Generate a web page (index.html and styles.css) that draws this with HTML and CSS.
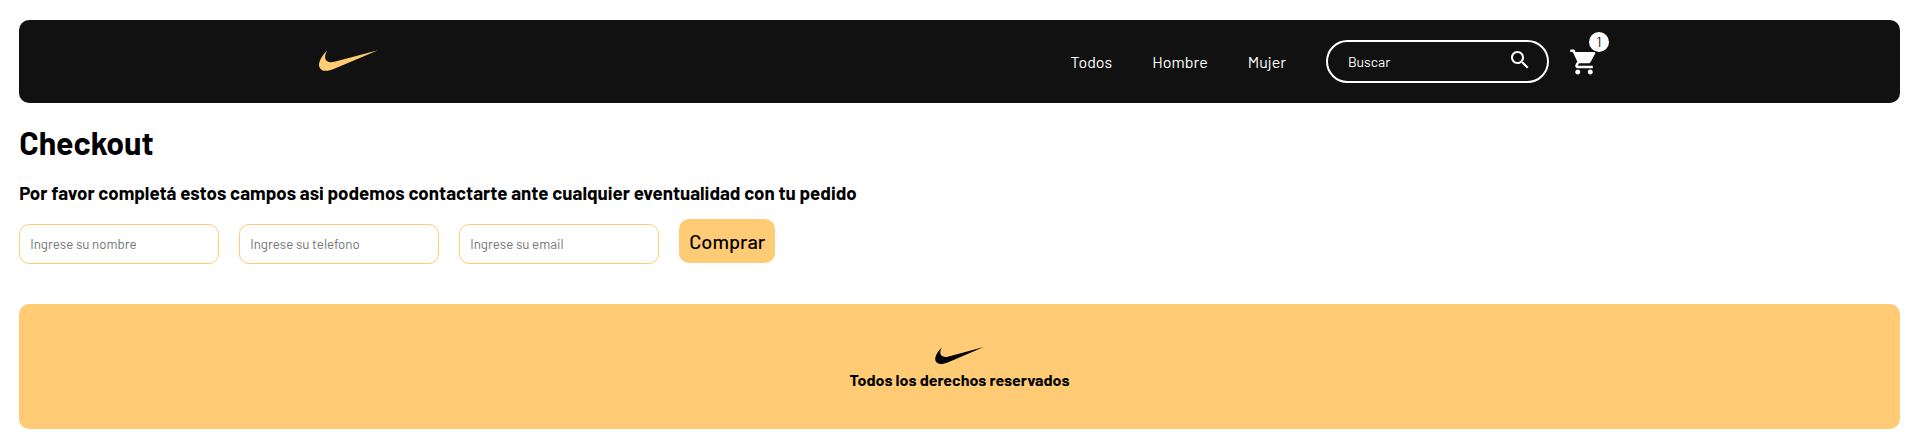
FILE: index.html
```html
<!DOCTYPE html>
<html lang="es">
<head>
<meta charset="utf-8">
<meta name="viewport" content="width=device-width, initial-scale=1">
<title>Checkout</title>
<link rel="stylesheet" href="styles.css">
</head>
<body>
<header class="header">
  <div class="header-inner">
    <a class="logo" href="#" aria-label="Inicio">
      <svg class="logo-icon" viewBox="0 7.8 24 8.4" aria-hidden="true"><path d="M24 7.8L6.442 15.276c-1.456.616-2.679.925-3.668.925-1.12 0-1.933-.392-2.437-1.177-.317-.504-.41-1.143-.28-1.918.13-.775.476-1.6 1.036-2.478.467-.71 1.232-1.643 2.297-2.8a6.122 6.122 0 00-.784 1.848c-.28 1.195-.028 2.072.756 2.632.373.261.886.392 1.54.392.522 0 1.11-.084 1.764-.252L24 7.8z"/></svg>
    </a>
    <nav class="nav">
      <a class="nav-link" href="#">Todos</a>
      <a class="nav-link" href="#">Hombre</a>
      <a class="nav-link" href="#">Mujer</a>
    </nav>
    <form class="search" role="search">
      <input class="search-input" type="text" placeholder="Buscar" aria-label="Buscar">
      <button class="search-button" type="button" aria-label="Buscar productos">
        <svg class="search-icon" viewBox="0 0 24 24" aria-hidden="true"><path d="M15.5 14h-.79l-.28-.27C15.41 12.59 16 11.11 16 9.5 16 5.91 13.09 3 9.5 3S3 5.91 3 9.5 5.91 16 9.5 16c1.61 0 3.09-.59 4.23-1.57l.27.28v.79l5 4.99L20.49 19l-4.99-5zm-6 0C7.01 14 5 11.99 5 9.5S7.01 5 9.5 5 14 7.01 14 9.5 11.99 14 9.5 14z"/></svg>
      </button>
    </form>
    <a class="cart" href="#" aria-label="Carrito">
      <svg class="cart-icon" viewBox="0 0 24 24" aria-hidden="true"><path d="M7 18c-1.1 0-1.99.9-1.99 2S5.9 22 7 22s2-.9 2-2-.9-2-2-2zM1 2v2h2l3.6 7.59-1.35 2.45c-.16.28-.25.61-.25.96 0 1.1.9 2 2 2h12v-2H7.42c-.14 0-.25-.11-.25-.25l.03-.12.9-1.63h7.45c.75 0 1.41-.41 1.75-1.03l3.58-6.49c.08-.14.12-.31.12-.48 0-.55-.45-1-1-1H5.21l-.94-2H1zm16 16c-1.1 0-1.99.9-1.99 2s.89 2 1.99 2 2-.9 2-2-.9-2-2-2z"/></svg>
      <span class="cart-badge">1</span>
    </a>
  </div>
</header>
<main class="checkout">
  <h1 class="title">Checkout</h1>
  <h3 class="subtitle">Por favor completá estos campos asi podemos contactarte ante cualquier eventualidad con tu pedido</h3>
  <form class="form">
    <input class="field" type="text" placeholder="Ingrese su nombre" aria-label="Nombre">
    <input class="field" type="tel" placeholder="Ingrese su telefono" aria-label="Telefono">
    <input class="field" type="email" placeholder="Ingrese su email" aria-label="Email">
    <button class="buy" type="button">Comprar</button>
  </form>
</main>
<footer class="footer">
  <svg class="footer-icon" viewBox="0 7.8 24 8.4" aria-hidden="true"><path d="M24 7.8L6.442 15.276c-1.456.616-2.679.925-3.668.925-1.12 0-1.933-.392-2.437-1.177-.317-.504-.41-1.143-.28-1.918.13-.775.476-1.6 1.036-2.478.467-.71 1.232-1.643 2.297-2.8a6.122 6.122 0 00-.784 1.848c-.28 1.195-.028 2.072.756 2.632.373.261.886.392 1.54.392.522 0 1.11-.084 1.764-.252L24 7.8z"/></svg>
  <p class="footer-text">Todos los derechos reservados</p>
</footer>
</body>
</html>
```
FILE: styles.css
```css
* {
  box-sizing: border-box;
}

body {
  margin: 20px 1% 0;
  background: #fff;
  color: #000;
  font-family: Barlow, Roboto, "Liberation Sans", sans-serif;
}

.header {
  padding: 20px;
  border-radius: 10px;
  background: #111;
}

.header-inner {
  display: flex;
  align-items: center;
  max-width: 1281px;
  margin: 0 auto;
}

.logo {
  margin-right: auto;
  padding-bottom: 3px;
}

.logo-icon {
  display: block;
  width: 59px;
  height: 21px;
  fill: #ffcb74;
}

.nav {
  display: flex;
  gap: 40px;
  margin-right: 40px;
}

.nav-link {
  color: #fff;
  font-size: 16px;
  line-height: 20px;
  text-decoration: none;
}

.search {
  display: flex;
  align-items: center;
  width: 223px;
  height: 43px;
  margin-right: 20px;
  padding: 0 15px 0 20px;
  border: 2px solid #fff;
  border-radius: 22px;
}

.search-input {
  flex: 1;
  min-width: 0;
  padding: 0;
  border: 0;
  outline: 0;
  background: transparent;
  color: #fff;
  font-family: inherit;
  font-size: 14px;
  line-height: 20px;
}

.search-input::placeholder {
  color: #fff;
}

.search-button {
  padding: 0 0 4px;
  border: 0;
  background: transparent;
}

.search-icon {
  display: block;
  width: 24px;
  height: 24px;
  fill: #fff;
}

.cart {
  position: relative;
  margin-right: 1px;
}

.cart-icon {
  display: block;
  width: 30px;
  height: 30px;
  fill: #fff;
}

.cart-badge {
  position: absolute;
  top: -15px;
  left: 20px;
  width: 20px;
  height: 20px;
  border-radius: 50%;
  background: #fff;
  color: #111;
  font-size: 14px;
  line-height: 20px;
  text-align: center;
}

.checkout {
  padding: 20px 0 40px;
}

.title {
  margin: 0 0 22px;
  font-size: 32px;
  font-weight: 700;
  line-height: 38px;
}

.subtitle {
  margin: 0 0 16px;
  font-weight: 700;
  line-height: 20px;
}

.form {
  display: flex;
  flex-wrap: wrap;
  align-items: flex-start;
  gap: 20px;
}

.field {
  width: 200px;
  height: 40px;
  margin-top: 5px;
  padding: 0 10px;
  border: 1px solid #ffcb74;
  border-radius: 10px;
  background: #fff;
  font-family: inherit;
  line-height: 20px;
}

.field::placeholder {
  color: #757575;
}

.buy {
  padding: 10px;
  border: 0;
  border-radius: 10px;
  background: #ffcb74;
  color: #000;
  font: 500 20px/24px Barlow, Roboto, sans-serif;
}

.footer {
  display: flex;
  flex-direction: column;
  align-items: center;
  gap: 6px;
  padding: 43px 20px 39px;
  border-radius: 10px;
  background: #ffcb74;
}

.footer-icon {
  width: 49px;
  height: 17px;
}

.footer-text {
  margin: 0;
  font-size: 16px;
  font-weight: 700;
  line-height: 20px;
}
```
